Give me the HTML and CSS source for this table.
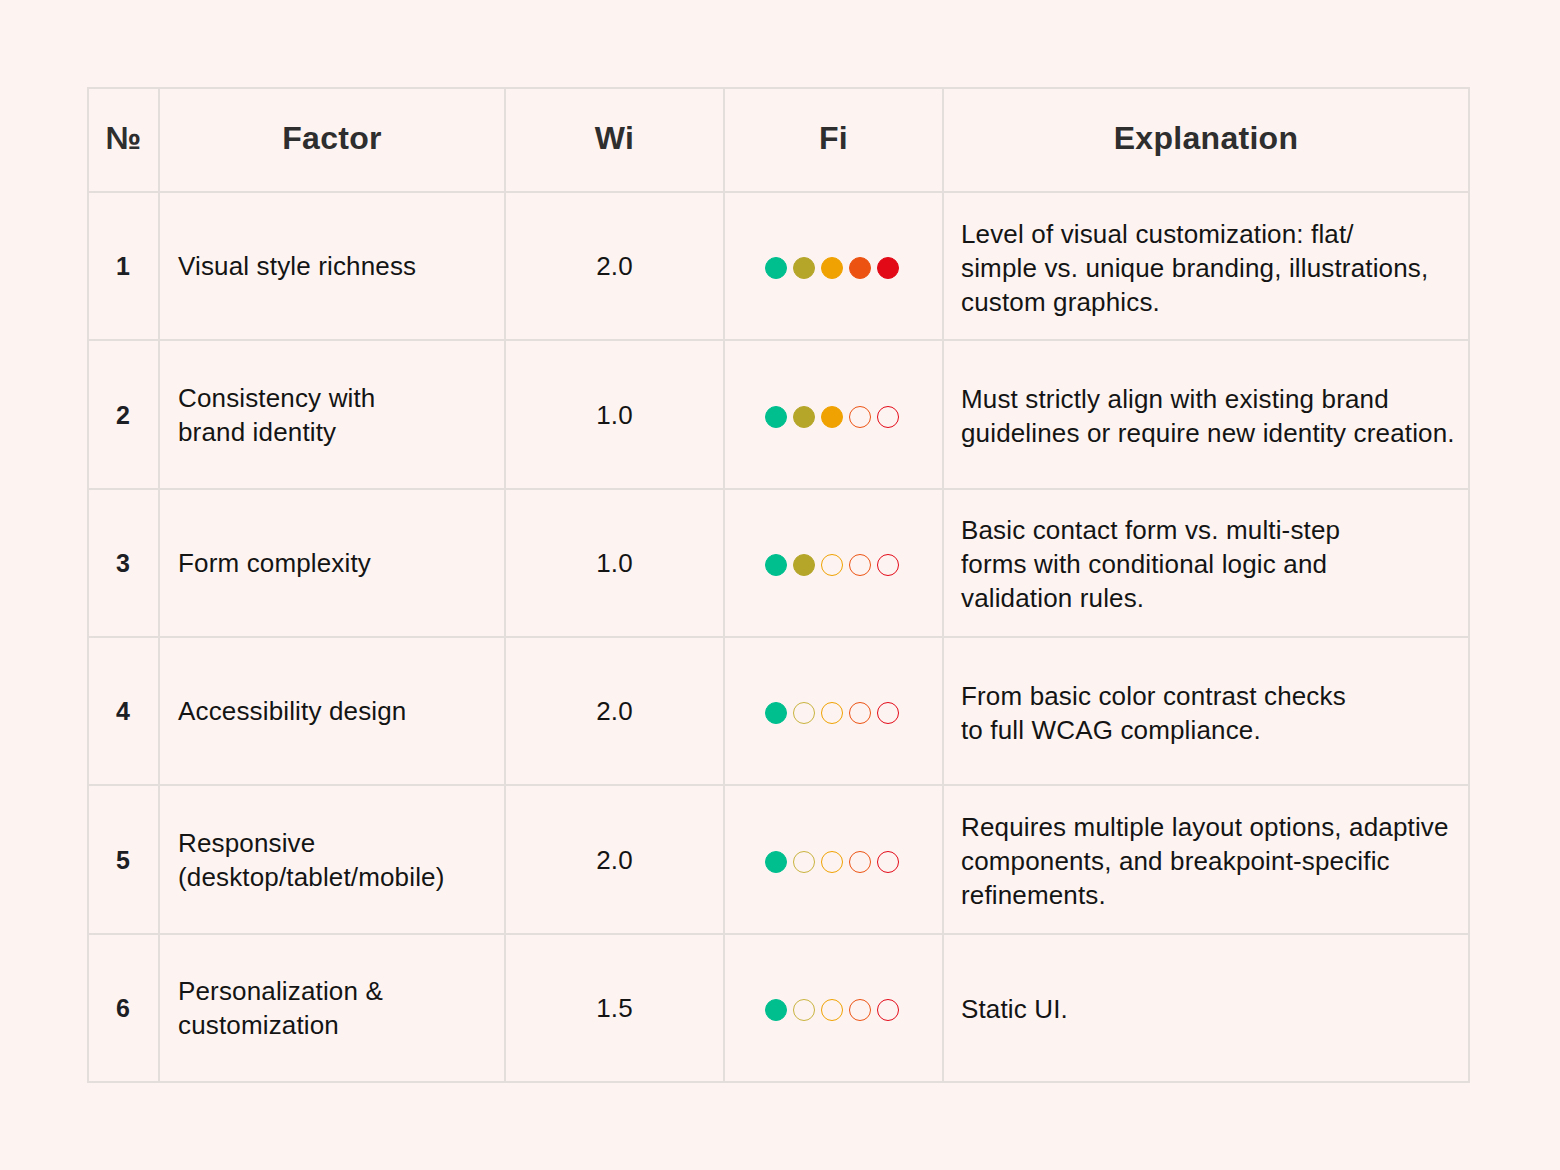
FILE: index.html
```html
<!DOCTYPE html>
<html lang="en">
<head>
<meta charset="utf-8">
<title>Factors</title>
<link rel="stylesheet" href="styles.css">
</head>
<body>
<div class="page">
  <table class="factors">
    <colgroup>
      <col class="c-num"><col class="c-factor"><col class="c-wi"><col class="c-fi"><col class="c-exp">
    </colgroup>
    <thead>
      <tr>
        <th>№</th>
        <th>Factor</th>
        <th>Wi</th>
        <th>Fi</th>
        <th>Explanation</th>
      </tr>
    </thead>
    <tbody>
      <tr>
        <td class="num">1</td>
        <td class="factor">Visual style richness</td>
        <td class="wi">2.0</td>
        <td class="fi"><span class="dots"><i class="d d1 on"></i><i class="d d2 on"></i><i class="d d3 on"></i><i class="d d4 on"></i><i class="d d5 on"></i></span></td>
        <td class="exp">Level of visual customization: flat/<br>simple vs. unique branding, illustrations,<br>custom graphics.</td>
      </tr>
      <tr>
        <td class="num">2</td>
        <td class="factor">Consistency with<br>brand identity</td>
        <td class="wi">1.0</td>
        <td class="fi"><span class="dots"><i class="d d1 on"></i><i class="d d2 on"></i><i class="d d3 on"></i><i class="d d4"></i><i class="d d5"></i></span></td>
        <td class="exp">Must strictly align with existing brand<br>guidelines or require new identity creation.</td>
      </tr>
      <tr>
        <td class="num">3</td>
        <td class="factor">Form complexity</td>
        <td class="wi">1.0</td>
        <td class="fi"><span class="dots"><i class="d d1 on"></i><i class="d d2 on"></i><i class="d d3"></i><i class="d d4"></i><i class="d d5"></i></span></td>
        <td class="exp">Basic contact form vs. multi-step<br>forms with conditional logic and<br>validation rules.</td>
      </tr>
      <tr>
        <td class="num">4</td>
        <td class="factor">Accessibility design</td>
        <td class="wi">2.0</td>
        <td class="fi"><span class="dots"><i class="d d1 on"></i><i class="d d2"></i><i class="d d3"></i><i class="d d4"></i><i class="d d5"></i></span></td>
        <td class="exp">From basic color contrast checks<br>to full WCAG compliance.</td>
      </tr>
      <tr>
        <td class="num">5</td>
        <td class="factor">Responsive<br>(desktop/tablet/mobile)</td>
        <td class="wi">2.0</td>
        <td class="fi"><span class="dots"><i class="d d1 on"></i><i class="d d2"></i><i class="d d3"></i><i class="d d4"></i><i class="d d5"></i></span></td>
        <td class="exp">Requires multiple layout options, adaptive<br>components, and breakpoint-specific<br>refinements.</td>
      </tr>
      <tr>
        <td class="num">6</td>
        <td class="factor">Personalization &amp;<br>customization</td>
        <td class="wi">1.5</td>
        <td class="fi"><span class="dots"><i class="d d1 on"></i><i class="d d2"></i><i class="d d3"></i><i class="d d4"></i><i class="d d5"></i></span></td>
        <td class="exp">Static UI.</td>
      </tr>
    </tbody>
  </table>
</div>
</body>
</html>
```

FILE: styles.css
```css
html, body {
  margin: 0;
  padding: 0;
  background: #fdf4f2;
}

.page {
  padding: 87px 0 0 87px;
}

.factors {
  border-collapse: collapse;
  table-layout: fixed;
  width: 1383px;
  font-family: "Liberation Sans", Arial, sans-serif;
  color: #141414;
}

.c-num { width: 71px; }
.c-factor { width: 346px; }
.c-wi { width: 219px; }
.c-fi { width: 219px; }
.c-exp { width: 526px; }

.factors th,
.factors td {
  border: 2px solid #e3dedc;
  padding: 0;
}

.factors th {
  height: 98px;
  padding-bottom: 4px;
  font-size: 32px;
  font-weight: 700;
  letter-spacing: 0.3px;
  color: #2e2e2e;
  text-align: center;
  vertical-align: middle;
}

.factors td {
  height: 146.35px;
  font-size: 26px;
  letter-spacing: 0.15px;
  line-height: 34px;
  vertical-align: middle;
}

.factors td.num {
  text-align: center;
  font-weight: 700;
  font-size: 25px;
  letter-spacing: 0;
  color: #1c2024;
  padding-right: 1px;
}

.factors td.factor {
  padding-left: 18px;
}

.factors td.wi {
  text-align: center;
}

.factors td.fi {
  text-align: center;
  padding-right: 3px;
}

.factors td.exp {
  padding-left: 17px;
  padding-top: 3px;
  height: 143.35px;
}

.dots {
  display: inline-flex;
  gap: 6px;
  vertical-align: middle;
}

.d {
  display: block;
  width: 22px;
  height: 22px;
  box-sizing: border-box;
  border-radius: 50%;
  border: 1.5px solid currentColor;
}

.d.on {
  background: currentColor;
}

.d1 { color: #00bf8f; }
.d2 { color: #b5a62a; }
.d3 { color: #f0a202; }
.d4 { color: #ec5312; }
.d5 { color: #e30a18; }

.d2:not(.on) { color: #c9b33e; }
```
